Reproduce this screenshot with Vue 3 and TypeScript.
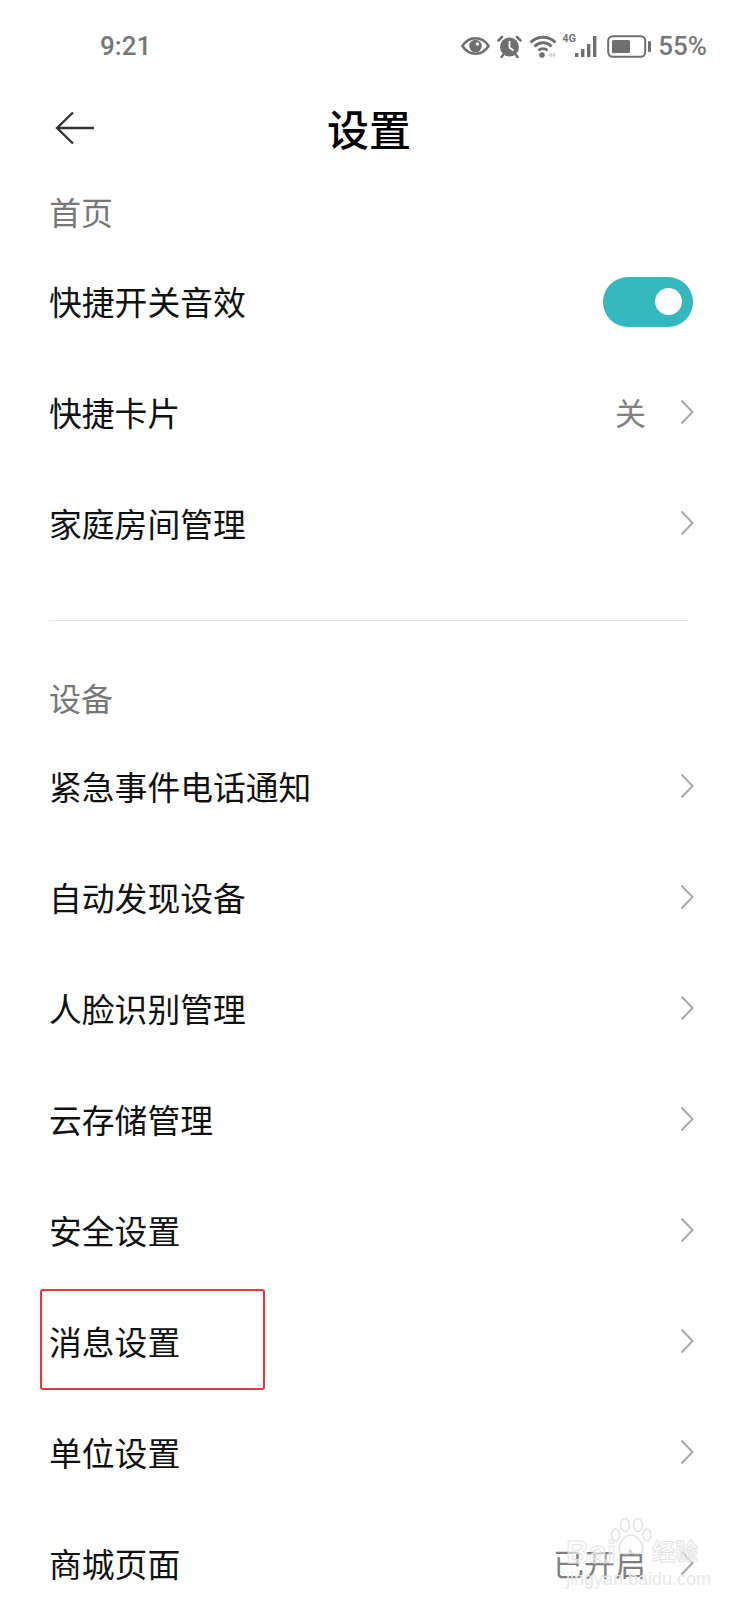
<template>
  <div class="screen">
    <div class="status-bar">
      <span class="clock">9:21</span>
      <div class="status-icons">
        <svg class="eye" width="29" height="18" viewBox="0 0 30 18">
          <path d="M1.500 9C5 3.500 10 1 15 1s10 2.500 13.500 8C25 14.500 20 17 15 17S5 14.500 1.500 9z" fill="none" stroke="#6f6f6f" stroke-width="2.600" />
          <circle cx="15" cy="9" r="6.500" fill="#6f6f6f" />
          <circle cx="17" cy="7" r="1.800" fill="#fff" />
        </svg>
        <svg class="alarm" width="25" height="23" viewBox="0 0 25 23">
          <circle cx="12.500" cy="12" r="9.500" fill="#6f6f6f" />
          <path d="M12.500 6V12.500L16.500 15.500" fill="none" stroke="#fff" stroke-width="1.800" />
          <path d="M1.500 5.500 5 2M23.500 5.500 20 2M6 20 4.500 22M19 20 20.500 22" stroke="#6f6f6f" stroke-width="2.600" stroke-linecap="round" />
        </svg>
        <svg class="wifi" width="28" height="24" viewBox="0 0 28 24">
          <path d="M1.500 8.500C8.500 1.500 19.500 1.500 26.500 8.500M5.500 12.500C10.500 7.500 17.500 7.500 22.500 12.500M9.500 16.500C12 14 16 14 18.500 16.500" fill="none" stroke="#6f6f6f" stroke-width="2.800" />
          <circle cx="13" cy="21" r="2.800" fill="#6f6f6f" />
          <path d="M19 21h8M22 18.500v5M25 18.500v5" stroke="#c9c9c9" stroke-width="1.200" />
        </svg>
        <div class="signal">
          <span class="net">4G</span>
          <svg width="24" height="21" viewBox="0 0 24 21">
            <rect x="0" y="17" width="3.400" height="4" fill="#6f6f6f" />
            <rect x="6" y="13" width="3.400" height="8" fill="#6f6f6f" />
            <rect x="12" y="8" width="3.400" height="13" fill="#6f6f6f" />
            <rect x="18" y="0" width="3.400" height="21" fill="#6f6f6f" />
          </svg>
        </div>
        <svg class="battery" width="45" height="23" viewBox="0 0 45 23">
          <rect x="1.200" y="1.200" width="37" height="20.600" rx="4.500" fill="none" stroke="#6f6f6f" stroke-width="2" />
          <rect x="5" y="5" width="18" height="13" rx="1.500" fill="#6f6f6f" />
          <rect x="41" y="6" width="3" height="11" rx="1" fill="#6f6f6f" />
        </svg>
        <span class="percent">55%</span>
      </div>
    </div>

    <div class="title-bar">
      <svg class="back" width="40" height="34" viewBox="0 0 40 34">
        <path d="M39 17H2M18 1.500 2 17l16 15.500" fill="none" stroke="#333" stroke-width="2.400" />
      </svg>
      <h1>设置</h1>
    </div>

    <div class="section-label first">首页</div>
    <div class="row" v-for="item in homeItems" :key="item.name">
      <span class="row-name">{{ item.name }}</span>
      <div v-if="item.toggle" class="toggle"><span class="knob"></span></div>
      <template v-else>
        <span v-if="item.value" class="row-value">{{ item.value }}</span>
        <svg class="chevron" width="14" height="26" viewBox="0 0 14 26">
          <path d="M1.500 1.500 12.500 13 1.500 24.500" fill="none" stroke="#a8a8a8" stroke-width="2" />
        </svg>
      </template>
    </div>

    <div class="divider"></div>

    <div class="section-label">设备</div>
    <div class="row" v-for="item in deviceItems" :key="item.name">
      <span class="row-name">{{ item.name }}</span>
      <span v-if="item.value" class="row-value">{{ item.value }}</span>
      <svg class="chevron" width="14" height="26" viewBox="0 0 14 26">
        <path d="M1.500 1.500 12.500 13 1.500 24.500" fill="none" stroke="#a8a8a8" stroke-width="2" />
      </svg>
    </div>

    <div class="highlight"></div>

    <div class="watermark">
      <span class="wm-bai">Bai</span>
      <svg class="wm-paw" width="42" height="38" viewBox="0 0 42 38">
        <g fill="rgba(255,255,255,0.6)" stroke="#e2e2e2" stroke-width="1.500">
          <ellipse cx="5.500" cy="17" rx="4" ry="6" />
          <ellipse cx="15" cy="7" rx="4.500" ry="6.500" />
          <ellipse cx="28" cy="7" rx="4.500" ry="6.500" />
          <ellipse cx="37" cy="17" rx="4" ry="6" />
          <path d="M21 17c6 0 12 8 12 14 0 6-8 5-12 4-4 1-12 2-12-4 0-6 6-14 12-14z" />
        </g>
      </svg>
      <span class="wm-jy">经验</span>
      <span class="wm-url">jingyan.baidu.com</span>
    </div>
  </div>
</template>

<script setup lang="ts">
interface SettingItem {
  name: string;
  value?: string;
  toggle?: boolean;
}

const homeItems: SettingItem[] = [
  { name: '快捷开关音效', toggle: true },
  { name: '快捷卡片', value: '关' },
  { name: '家庭房间管理' }
];

const deviceItems: SettingItem[] = [
  { name: '紧急事件电话通知' },
  { name: '自动发现设备' },
  { name: '人脸识别管理' },
  { name: '云存储管理' },
  { name: '安全设置' },
  { name: '消息设置' },
  { name: '单位设置' },
  { name: '商城页面', value: '已开启' }
];
</script>

<style>
html,
body {
  margin: 0;
  background: #fff;
}
</style>

<style scoped>
.screen {
  position: relative;
  width: 738px;
  height: 1600px;
  overflow: hidden;
  background: #fff;
  font-family: "Noto Sans CJK SC", "Noto Sans", sans-serif;
  color: #111;
}

.status-bar {
  height: 92px;
  display: flex;
  align-items: center;
  justify-content: space-between;
  padding: 0 31px 0 100px;
  box-sizing: border-box;
  color: #777;
}

.clock {
  font-family: Roboto, sans-serif;
  font-size: 26px;
  font-weight: 500;
}

.status-icons {
  display: flex;
  align-items: center;
}

.eye { margin-right: 7px; }
.alarm { margin-right: 7px; }
.wifi { margin-right: 5px; }

.signal {
  display: flex;
  align-items: flex-end;
  position: relative;
  margin-right: 8px;
  padding-left: 13px;
}

.net {
  position: absolute;
  left: 0;
  top: -3px;
  font-family: Roboto, sans-serif;
  font-size: 11px;
  font-weight: 700;
  line-height: 12px;
}

.percent {
  font-family: Roboto, sans-serif;
  font-size: 26px;
  font-weight: 500;
  margin-left: 6px;
}

.title-bar {
  position: relative;
  height: 72px;
  display: flex;
  align-items: center;
  justify-content: center;
}

.title-bar h1 {
  margin: 0;
  font-size: 42px;
  font-weight: 500;
  color: #000;
  line-height: 1;
}

.back {
  position: absolute;
  left: 55px;
  top: 19px;
}

.section-label {
  height: 70px;
  padding-left: 49px;
  font-size: 32px;
  line-height: 74px;
  color: #777;
}

.section-label.first {
  height: 81px;
  line-height: 94px;
}

.row {
  height: 111px;
  display: flex;
  align-items: center;
  padding: 0 44px 0 49px;
}

.row-name {
  flex: 1;
  font-size: 32.800px;
  color: #111;
}

.row-value {
  font-size: 31px;
  color: #808080;
  margin-right: 34px;
}

.toggle {
  width: 90px;
  height: 50px;
  margin: 2px 1px 0 0;
  border-radius: 25px;
  background: #35b7be;
  display: flex;
  align-items: center;
  justify-content: flex-end;
  padding-right: 11px;
  box-sizing: border-box;
}

.knob {
  width: 27px;
  height: 27px;
  border-radius: 50%;
  background: #fff;
}

.divider {
  height: 1px;
  margin: 42px 49px 0;
  background: #e6e6e6;
}

.section-label:not(.first) {
  margin-top: 39px;
}

.highlight {
  position: absolute;
  left: 40px;
  top: 1289px;
  width: 225px;
  height: 101px;
  box-sizing: border-box;
  border: 2px solid #e5383b;
  border-radius: 3px;
}

.watermark {
  position: absolute;
  left: 566px;
  top: 1518px;
  width: 134px;
  height: 66px;
}

.wm-bai,
.wm-jy {
  position: absolute;
  color: rgba(255, 255, 255, 0.55);
  -webkit-text-stroke: 1px #e4e4e4;
  font-weight: 700;
  line-height: 1;
}

.wm-bai {
  left: 0;
  top: 18px;
  font-family: "Liberation Sans", sans-serif;
  font-size: 32px;
}

.wm-jy {
  left: 86px;
  top: 21px;
  font-size: 23px;
}

.wm-paw {
  position: absolute;
  left: 44px;
  top: 0;
}

.wm-url {
  position: absolute;
  left: 0;
  top: 52px;
  font-family: "Liberation Sans", sans-serif;
  font-size: 18px;
  line-height: 1;
  color: #e8e8e8;
  white-space: nowrap;
}
</style>
